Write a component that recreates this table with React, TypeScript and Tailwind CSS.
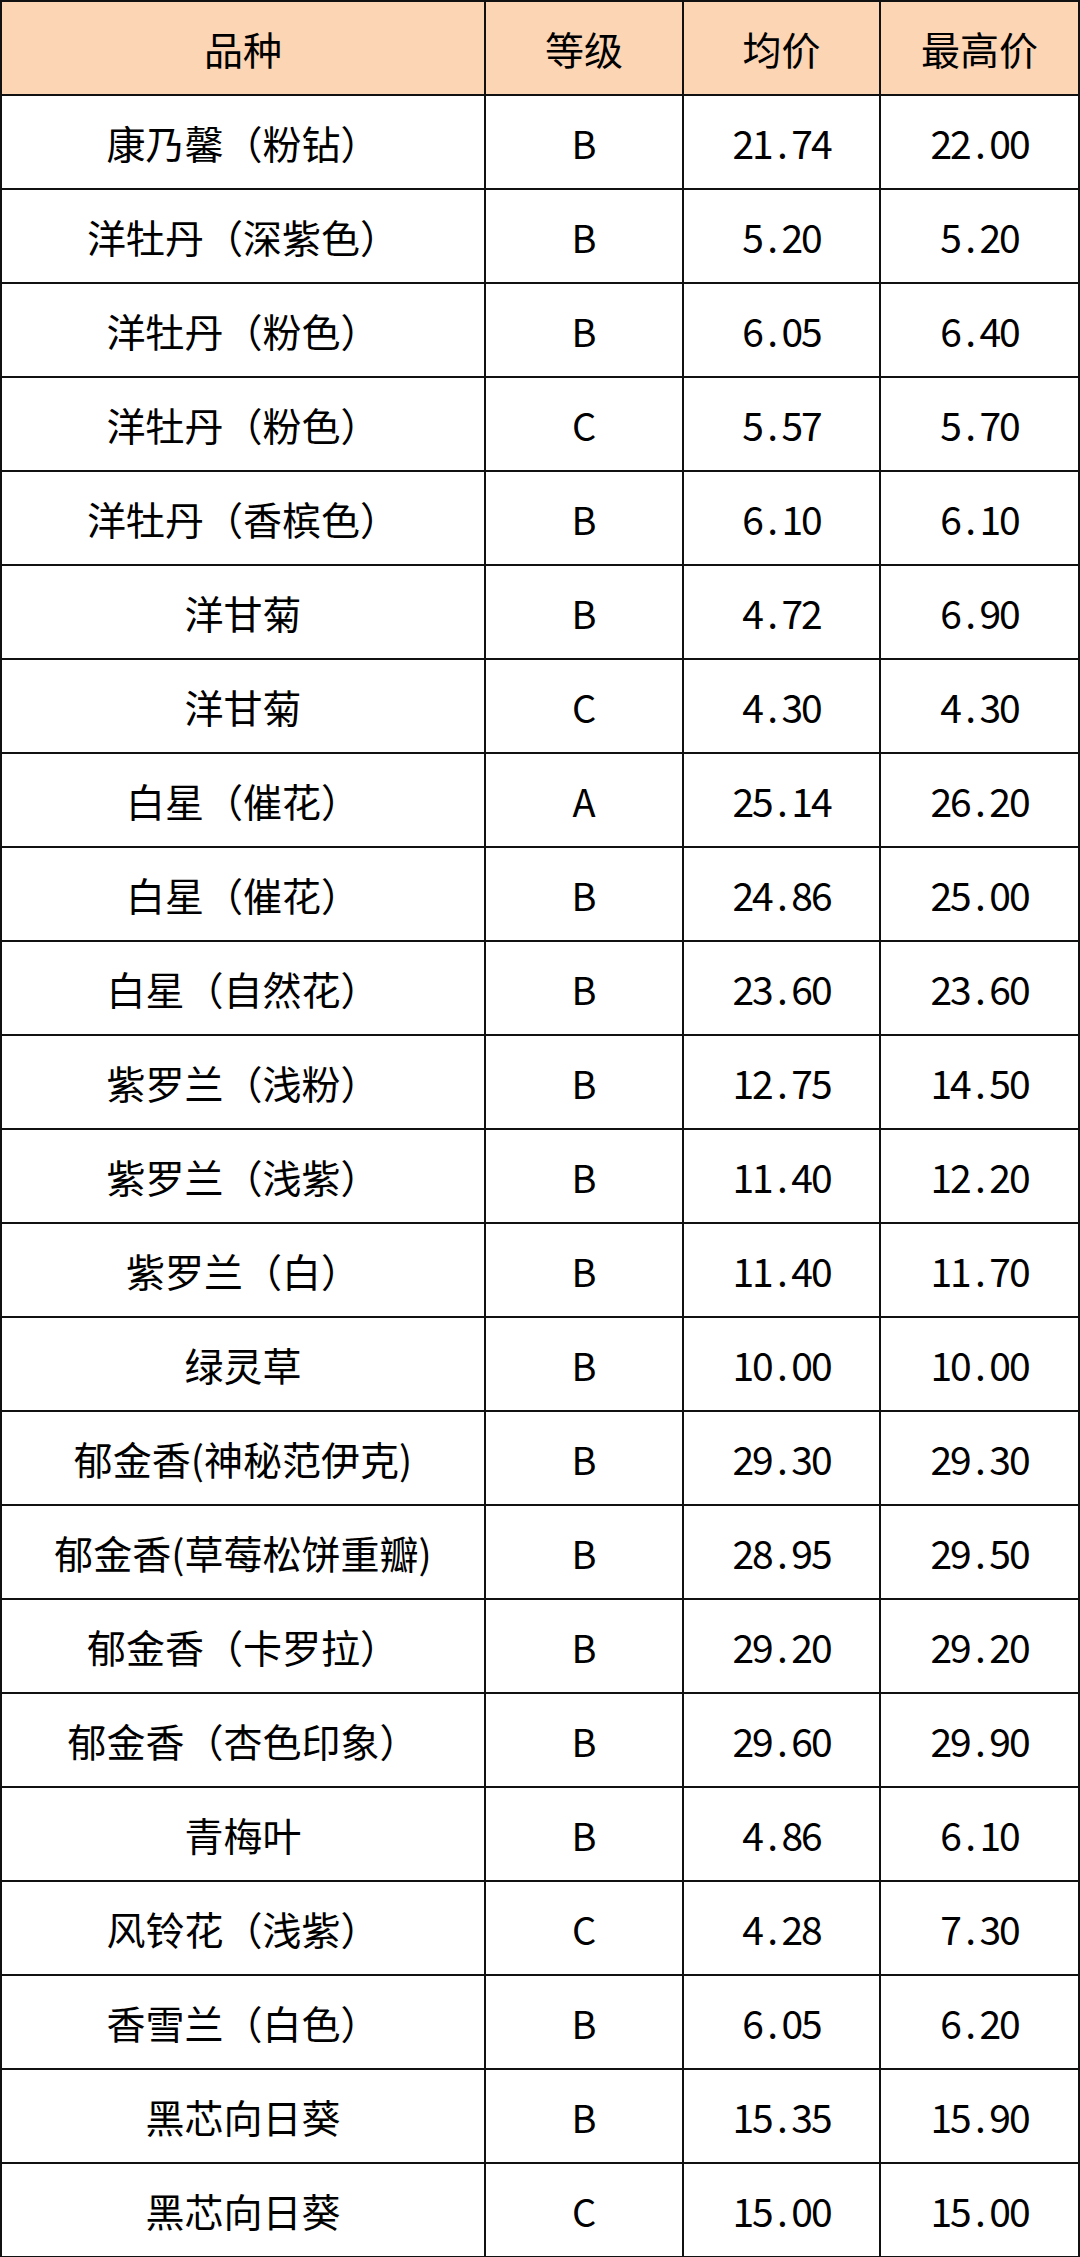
import React from "react";

type Row = {
  name: string;
  grade: string;
  avg: string;
  max: string;
};

const ROWS: Row[] = [
  { name: "康乃馨（粉钻）", grade: "B", avg: "21.74", max: "22.00" },
  { name: "洋牡丹（深紫色）", grade: "B", avg: "5.20", max: "5.20" },
  { name: "洋牡丹（粉色）", grade: "B", avg: "6.05", max: "6.40" },
  { name: "洋牡丹（粉色）", grade: "C", avg: "5.57", max: "5.70" },
  { name: "洋牡丹（香槟色）", grade: "B", avg: "6.10", max: "6.10" },
  { name: "洋甘菊", grade: "B", avg: "4.72", max: "6.90" },
  { name: "洋甘菊", grade: "C", avg: "4.30", max: "4.30" },
  { name: "白星（催花）", grade: "A", avg: "25.14", max: "26.20" },
  { name: "白星（催花）", grade: "B", avg: "24.86", max: "25.00" },
  { name: "白星（自然花）", grade: "B", avg: "23.60", max: "23.60" },
  { name: "紫罗兰（浅粉）", grade: "B", avg: "12.75", max: "14.50" },
  { name: "紫罗兰（浅紫）", grade: "B", avg: "11.40", max: "12.20" },
  { name: "紫罗兰（白）", grade: "B", avg: "11.40", max: "11.70" },
  { name: "绿灵草", grade: "B", avg: "10.00", max: "10.00" },
  { name: "郁金香(神秘范伊克)", grade: "B", avg: "29.30", max: "29.30" },
  { name: "郁金香(草莓松饼重瓣)", grade: "B", avg: "28.95", max: "29.50" },
  { name: "郁金香（卡罗拉）", grade: "B", avg: "29.20", max: "29.20" },
  { name: "郁金香（杏色印象）", grade: "B", avg: "29.60", max: "29.90" },
  { name: "青梅叶", grade: "B", avg: "4.86", max: "6.10" },
  { name: "风铃花（浅紫）", grade: "C", avg: "4.28", max: "7.30" },
  { name: "香雪兰（白色）", grade: "B", avg: "6.05", max: "6.20" },
  { name: "黑芯向日葵", grade: "B", avg: "15.35", max: "15.90" },
  { name: "黑芯向日葵", grade: "C", avg: "15.00", max: "15.00" },
];

// spreadsheet font gives the period a full half-width cell
function Price({ value }: { value: string }) {
  const [whole, frac] = value.split(".");
  return (
    <span className="tabular-nums tracking-[-2px]">
      {whole}
      <span className="inline-block w-[0.5em]">.</span>
      {frac}
    </span>
  );
}

const cell = "border-2 border-[#111] text-center align-middle";

export default function App() {
  return (
    <div className="w-[1080px] bg-white font-['Noto_Sans_CJK_SC','Noto_Sans',sans-serif] text-[39px] text-black">
      <table className="w-full table-fixed border-collapse border-2 border-[#333]">
        <colgroup>
          <col className="w-[484px]" />
          <col className="w-[198px]" />
          <col className="w-[197px]" />
          <col />
        </colgroup>
        <thead>
          <tr className="h-[94px] bg-[#fcd5b4]">
            <th className={`${cell} font-normal`}>品种</th>
            <th className={`${cell} font-normal`}>等级</th>
            <th className={`${cell} font-normal`}>均价</th>
            <th className={`${cell} font-normal`}>最高价</th>
          </tr>
        </thead>
        <tbody>
          {ROWS.map((row, i) => (
            <tr key={`${row.name}-${row.grade}-${i}`} className="h-[94px]">
              <td className={`${cell} whitespace-nowrap`}>{row.name}</td>
              <td className={`${cell} text-[38px]`}>{row.grade}</td>
              <td className={cell}>
                <Price value={row.avg} />
              </td>
              <td className={cell}>
                <Price value={row.max} />
              </td>
            </tr>
          ))}
        </tbody>
      </table>
    </div>
  );
}
